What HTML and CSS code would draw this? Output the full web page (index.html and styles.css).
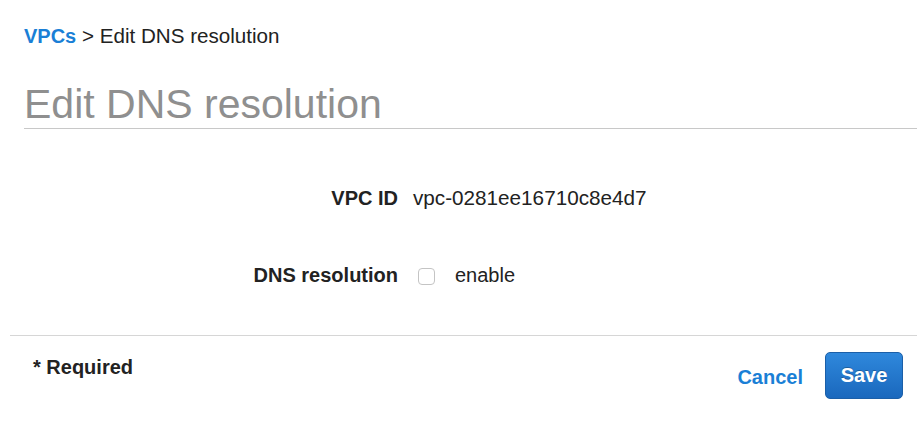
FILE: index.html
```html
<!DOCTYPE html>
<html>
<head>
<meta charset="utf-8">
<title>Edit DNS resolution</title>
<link rel="stylesheet" href="styles.css">
</head>
<body>
<div class="page">
  <div class="breadcrumb"><a class="crumb-link" href="#">VPCs</a> &gt; Edit DNS resolution</div>
  <h1 class="title">Edit DNS resolution</h1>
  <div class="form">
    <div class="label">VPC ID</div>
    <div class="value">vpc-0281ee16710c8e4d7</div>
    <div class="label">DNS resolution</div>
    <div class="value check-row"><span class="checkbox"></span><span class="check-text">enable</span></div>
  </div>
  <div class="footer">
    <div class="required">* Required</div>
    <div class="actions">
      <a class="cancel" href="#">Cancel</a>
      <button class="save" type="button">Save</button>
    </div>
  </div>
</div>
</body>
</html>
```
FILE: styles.css
```css
html, body {
  margin: 0;
  padding: 0;
  background: #fff;
}
body {
  font-family: "Liberation Sans", Arial, sans-serif;
  font-size: 20px;
  color: #222;
}
.page {
  padding: 0 3px 0 10px;
}
.breadcrumb {
  padding: 24px 0 0 14px;
  line-height: 24px;
  font-size: 20.6px;
  color: #222;
}
.crumb-link {
  color: #1a7fd6;
  font-weight: bold;
  font-size: 20px;
  text-decoration: none;
}
.title {
  margin: 32px 0 0 14px;
  font-size: 41px;
  line-height: 48px;
  font-weight: normal;
  color: #8f8f8f;
  border-bottom: 1px solid #c8c8c8;
}
.form {
  display: grid;
  grid-template-columns: 388px 1fr;
  column-gap: 15px;
  row-gap: 53px;
  margin-top: 57px;
  line-height: 24px;
}
.label {
  text-align: right;
  font-weight: bold;
  color: #222;
}
.value {
  color: #222;
  font-size: 20.7px;
}
.check-row {
  display: flex;
  align-items: center;
  font-size: 20px;
}
.checkbox {
  box-sizing: border-box;
  width: 17px;
  height: 17px;
  margin-left: 5px;
  margin-top: 2px;
  border: 1px solid #c4c4c4;
  border-radius: 4px;
  background: #fff;
}
.check-text {
  margin-left: 20px;
}
.footer {
  margin-top: 48px;
  border-top: 1px solid #d6d6d6;
  display: flex;
  justify-content: space-between;
  align-items: flex-start;
}
.required {
  margin: 19px 0 0 23px;
  line-height: 24px;
  font-weight: bold;
  color: #222;
}
.actions {
  display: flex;
  align-items: center;
  gap: 22px;
  margin: 16px 14px 0 0;
}
.cancel {
  color: #1a7fd6;
  font-weight: bold;
  text-decoration: none;
  line-height: 24px;
  margin-top: 3px;
}
.save {
  box-sizing: border-box;
  width: 78px;
  height: 47px;
  padding: 0;
  border: 1px solid #1b5fa8;
  border-radius: 5px;
  background: linear-gradient(#2f88dc, #1a68bd);
  color: #fff;
  font-family: "Liberation Sans", Arial, sans-serif;
  font-size: 20px;
  font-weight: bold;
  text-shadow: 0 -1px 0 rgba(0,0,0,0.25);
}
```
